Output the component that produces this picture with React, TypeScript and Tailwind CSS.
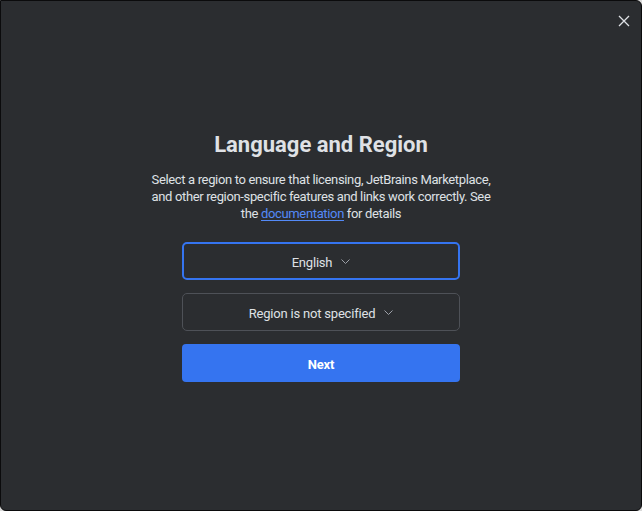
import React from "react";

function Chevron() {
  return (
    <svg width="9" height="5" viewBox="0 0 9 5" fill="none" className="ml-[9px] mt-[-3px]">
      <path d="M0.5 0.5L4.5 4.5L8.5 0.5" stroke="#9da0a8" strokeWidth="1" />
    </svg>
  );
}

export default function App() {
  return (
    <div className="w-[642px] h-[511px] bg-[#d9d9d9]" style={{ fontFamily: "Roboto, 'Noto Sans', sans-serif" }}>
      <div className="relative w-full h-full rounded-[6px] rounded-tl-none border border-[#0b0b0c] bg-[#2b2d30] text-[#dfe1e5] flex flex-col items-center pt-[129px]">
        {/* close */}
        <button className="absolute top-[14px] right-[11px] w-[12px] h-[12px]" aria-label="Close">
          <svg width="12" height="12" viewBox="0 0 12 12" fill="none">
            <path d="M1 1L11 11M11 1L1 11" stroke="#dfe1e5" strokeWidth="1.3" />
          </svg>
        </button>

        <h1 className="text-[22px] leading-[30px] font-bold text-[#dfe1e5]">Language and Region</h1>

        <p className="mt-[11px] w-[342px] text-center text-[13px] leading-[17px] tracking-[-0.35px] text-[#dfe1e5]">
          Select a region to ensure that licensing, JetBrains Marketplace, and other region-specific features and links work correctly. See
          <br />
          the <a className="text-[#548af7] underline underline-offset-2">documentation</a> for details
        </p>

        <div className="mt-[20px] w-[278px] flex flex-col gap-[13px] text-[13px] tracking-[-0.2px]">
          <div className="h-[38px] pt-[4px] rounded-[5px] border-2 border-[#3574f0] flex items-center justify-center">
            English
            <Chevron />
          </div>
          <div className="h-[38px] pt-[4px] rounded-[5px] border border-[#4e5157] flex items-center justify-center">
            Region is not specified
            <Chevron />
          </div>
          <button className="h-[38px] pt-[4px] rounded-[4px] bg-[#3574f0] text-white font-bold">Next</button>
        </div>
      </div>
    </div>
  );
}
